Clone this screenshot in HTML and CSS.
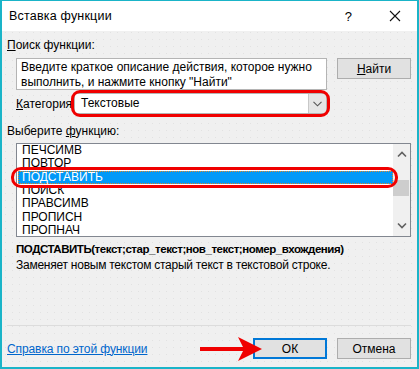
FILE: index.html
```html
<!DOCTYPE html>
<html lang="ru">
<head>
  <meta charset="UTF-8" />
  <title>Вставка функции</title>
  <link rel="stylesheet" href="styles.css">
</head>
<body>

  <div class="dialog">
    <div class="titlebar">
      <span class="title">Вставка функции</span>
      <span class="help">?</span>
      <svg class="close" width="12" height="12" viewBox="0 0 12 12">
        <path d="M1 1 L11 11 M11 1 L1 11" stroke="#111" stroke-width="1.1" fill="none"/>
      </svg>
    </div>

    <div class="content">
      <div class="label"><u>П</u>оиск функции:</div>

      <div class="search-row">
        <div class="search-box">Введите краткое описание действия, которое нужно выполнить, и нажмите кнопку "Найти"</div>
        <button class="btn find-btn"><u>Н</u>айти</button>
      </div>

      <div class="category-row">
        <span class="category-label"><u>К</u>атегория</span>
        <div class="select">
          <span class="select-value">Текстовые</span>
          <span class="select-arrow">
            <svg width="9" height="6" viewBox="0 0 9 6"><path d="M0.5 0.8 L4.5 4.8 L8.5 0.8" stroke="#555" stroke-width="1.1" fill="none"/></svg>
          </span>
        </div>
      </div>

      <div class="label list-label">Выберите <u>ф</u>ункцию:</div>

      <div class="listbox">
        <ul class="items">
          <li>ПЕЧСИМВ</li>
          <li>ПОВТОР</li>
          <li class="selected">ПОДСТАВИТЬ</li>
          <li>ПОИСК</li>
          <li>ПРАВСИМВ</li>
          <li>ПРОПИСН</li>
          <li>ПРОПНАЧ</li>
        </ul>
        <div class="scrollbar">
          <svg class="scroll-arrow" width="10" height="7" viewBox="0 0 10 7"><path d="M1 5.5 L5 1.5 L9 5.5" stroke="#606060" stroke-width="1.6" fill="none"/></svg>
          <div class="scroll-track"><div class="scroll-thumb"></div></div>
          <svg class="scroll-arrow" width="10" height="7" viewBox="0 0 10 7"><path d="M1 1.5 L5 5.5 L9 1.5" stroke="#606060" stroke-width="1.6" fill="none"/></svg>
        </div>
      </div>

      <div class="signature">ПОДСТАВИТЬ(текст;стар_текст;нов_текст;номер_вхождения)</div>
      <div class="desc">Заменяет новым текстом старый текст в текстовой строке.</div>

      <div class="separator"></div>

      <div class="footer">
        <a href="#" class="help-link">Справка по этой функции</a>
        <button class="btn ok-btn">ОК</button>
        <button class="btn">Отмена</button>
      </div>
    </div>

    <!-- red annotations on top of the dialog -->
    <div class="mark mark-category"></div>
    <div class="mark mark-item"></div>
    <svg class="arrow" width="66" height="26" viewBox="0 0 66 26">
      <path d="M2 13 L48 13" stroke="#f00000" stroke-width="4" fill="none"/>
      <polygon points="40,1 64,13 40,25 46,13" fill="#f00000"/>
    </svg>
  </div>

</body>
</html>
```

FILE: styles.css
```css
:root {
  --text: #000;
  --face: #f0f0f0;
  --btn: #e1e1e1;
  --btn-border: #adadad;
  --red: #f00000;
}
body {
  margin: 0;
  font-family: 'Liberation Sans', Arial, sans-serif;
  font-size: 12px;
  color: var(--text);
}
.dialog {
  position: relative;
  width: 419px;
  height: 369px;
  box-sizing: border-box;
  border: 2px solid #1ab4c8;
  border-top-width: 1px;
  background-color: var(--face);
  background-image: radial-gradient(#e2e2e2 0.6px, transparent 0.8px);
  background-size: 7px 7px;
  display: flex;
  flex-direction: column;
}
.titlebar {
  height: 30px;
  background: #fff;
  display: flex;
  align-items: center;
  padding-left: 7px;
}
.title {
  flex: 1;
  font-size: 12.5px;
  letter-spacing: 0.2px;
}
.help {
  font-size: 13px;
  margin-right: 37px;
}
.close {
  margin-right: 16px;
}
.content {
  flex: 1;
  display: flex;
  flex-direction: column;
  padding: 0 6px 0 5px;
}
.label {
  line-height: 16px;
  margin-top: 6px;
}
.search-row {
  display: flex;
  margin: 5px 0 0 9px;
}
.search-box {
  width: 311px;
  height: 32px;
  box-sizing: border-box;
  border: 1px solid #b4b4b4;
  background: #fff;
  padding: 1px 4px 0;
  line-height: 15px;
}
.btn {
  width: 74px;
  height: 21px;
  box-sizing: border-box;
  border: 1px solid var(--btn-border);
  background: var(--btn);
  font-family: inherit;
  font-size: 12px;
  color: var(--text);
  padding: 0;
}
.find-btn {
  margin-left: 10px;
}
.category-row {
  display: flex;
  align-items: center;
  margin: 3px 0 0 9px;
}
.category-label {
  width: 58px;
}
.select {
  width: 253px;
  height: 21px;
  box-sizing: border-box;
  border: 1px solid #b4b4b4;
  background: #fff;
  display: flex;
}
.select-value {
  flex: 1;
  padding-left: 6px;
  line-height: 19px;
}
.select-arrow {
  width: 17px;
  background: #e5e5e5;
  border-left: 1px solid #c8c8c8;
  display: flex;
  align-items: center;
  justify-content: center;
}
.list-label {
  margin-top: 9px;
}
.listbox {
  margin: 4px 0 0 9px;
  height: 94px;
  box-sizing: border-box;
  border: 1px solid #828790;
  background: #fff;
  display: flex;
  overflow: hidden;
}
.items {
  flex: 1;
  list-style: none;
  margin: 0;
  padding: 0 0 0 1px;
}
.items li {
  height: 13.33px;
  line-height: 13.33px;
  padding-left: 4px;
}
.items .selected {
  background: #0099f8;
  color: #fff;
  outline: 1px dotted #e08a2a;
  outline-offset: -1px;
}
.scrollbar {
  width: 17px;
  background: #f0f0f0;
  display: flex;
  flex-direction: column;
  align-items: center;
}
.scroll-arrow {
  margin: 7px 0;
}
.scroll-track {
  flex: 1;
  width: 100%;
}
.scroll-thumb {
  margin: 15px 1px 0 0;
  height: 16px;
  background: #cdcdcd;
}
.signature {
  font-weight: bold;
  font-size: 11.5px;
  letter-spacing: -0.45px;
  line-height: 16px;
  margin: 4px 0 0 9px;
}
.desc {
  letter-spacing: -0.25px;
  line-height: 16px;
  margin-left: 9px;
}
.separator {
  margin-top: 52px;
  height: 1px;
  background: #dcdcdc;
}
.footer {
  display: flex;
  align-items: center;
  margin-top: 12px;
  gap: 10px;
}
.help-link {
  flex: 1;
  color: #0066cc;
  text-decoration: underline;
  letter-spacing: -0.1px;
}
.ok-btn {
  border: 2px solid #0078d7;
}
.mark {
  position: absolute;
  box-sizing: border-box;
  border: 3px solid var(--red);
}
.mark-category {
  left: 69px;
  top: 89px;
  width: 259px;
  height: 27px;
  border-radius: 9px;
}
.mark-item {
  left: 9px;
  top: 166px;
  width: 387px;
  height: 21px;
  border-radius: 10px;
}
.arrow {
  position: absolute;
  left: 196px;
  top: 335px;
}
```
